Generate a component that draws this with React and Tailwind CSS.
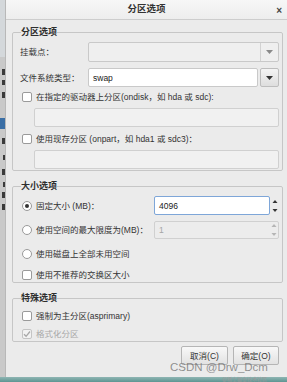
import React from 'react';

const font = { fontFamily: '"Liberation Sans", "Noto Sans CJK SC", sans-serif' };

const Check = ({ checked, disabled }) => (
    <span className={`w-[10px] h-[10px] shrink-0 rounded-[2px] border flex items-center justify-center ${disabled ? 'border-[#c4c4c4] bg-[#f2f2f2]' : 'border-[#9a9a9a] bg-white'}`}>
        {checked && (
            <svg width="8" height="8" viewBox="0 0 8 8">
                <path d="M1 4.2 L3.1 6.3 L7 1.5" fill="none" stroke={disabled ? '#a8a8a8' : '#333'} strokeWidth="1.3" />
            </svg>
        )}
    </span>
);

const Radio = ({ checked }) => (
    <span className="w-[10px] h-[10px] shrink-0 rounded-full border border-[#9a9a9a] bg-white flex items-center justify-center">
        {checked && <span className="w-[4px] h-[4px] rounded-full bg-[#333]" />}
    </span>
);

const Arrow = ({ dark }) => (
    <svg width="7" height="4" viewBox="0 0 7 4">
        <path d="M0 0 L7 0 L3.5 4 Z" fill={dark ? '#333' : '#8a8a8a'} />
    </svg>
);

const Spin = ({ color }) => (
    <svg width="6" height="16" viewBox="0 0 6 16">
        <path d="M0.5 5 L5.5 5 L3 2 Z" fill={color} />
        <path d="M0.5 11 L5.5 11 L3 14 Z" fill={color} />
    </svg>
);

const Group = ({ title, className, children }) => (
    <fieldset className={`border border-[#c6c6c6] rounded-[2px] pl-[7px] pr-[3px] ${className}`}>
        <legend className="text-[9px] leading-[12px] font-bold text-[#2e2e2e] ml-[1px]">{title}</legend>
        {children}
    </fieldset>
);

// bits of the window behind the dialog
const marks = [
    { mt: 'mt-[12px]', h: 'h-[6px]' },
    { mt: 'mt-[5px]', h: 'h-[5px]' },
    { mt: 'mt-[7px]', h: 'h-[6px]' },
];

const App = () => {
    return (
        <div className="w-[287px] h-[382px] overflow-hidden flex flex-col bg-[#c4c4c4] relative text-[#333]" style={font}>
            <div className="flex flex-1">
                <div className="w-[5px] flex flex-col overflow-hidden">
                    <div className="h-[57px] bg-[#d4d8db]" />
                    <div className="flex-1 bg-[#c9c9c9] flex flex-col items-end">
                        {marks.map((m, i) => (
                            <span key={i} className={`w-[3px] ${m.h} ${m.mt} bg-[#3a3a3a]`} />
                        ))}
                        <span className="w-full h-[11px] mt-[20px] bg-[#3a6ea5]" />
                        <span className="w-[3px] h-[6px] mt-[9px] bg-[#3a3a3a]" />
                        <span className="w-[2px] h-[5px] mt-[11px] bg-[#3a3a3a]" />
                        <span className="w-[3px] h-[6px] mt-[9px] bg-[#3a3a3a]" />
                        <span className="w-[2px] h-[5px] mt-[7px] bg-[#3a3a3a]" />
                        <span className="w-[3px] h-[6px] mt-[5px] bg-[#3a3a3a]" />
                        <span className="w-[3px] h-[6px] mt-[6px] bg-[#3a3a3a]" />
                    </div>
                </div>

                {/* dialog */}
                <div className="flex-1 flex flex-col bg-[#ebebeb] border-l border-[#b8b8b8]">
                    <div className="h-[20px] shrink-0 flex items-center justify-center relative bg-gradient-to-b from-[#f7f7f7] to-[#ededed] border-b border-[#cdcdcd]">
                        <span className="text-[9.5px] font-bold text-[#333]">分区选项</span>
                        <span className="absolute right-[5px] top-[3px] text-[10px] font-bold text-[#444]">×</span>
                    </div>

                    <div className="pl-[6px] pr-[4px] pt-[6px] flex flex-col text-[8.5px] leading-[12px] whitespace-nowrap">
                        <Group title="分区选项" className="pb-[1px]">
                            <div className="flex items-center mt-[4px] h-[20px]">
                                <span className="w-[68px] shrink-0">挂载点：</span>
                                <div className="flex-1 h-full flex border border-[#c9c9c9] rounded-[2px] bg-[#efefef]">
                                    <div className="flex-1" />
                                    <div className="w-[18px] border-l border-[#d2d2d2] flex items-center justify-center">
                                        <Arrow />
                                    </div>
                                </div>
                            </div>
                            <div className="flex items-center mt-[6px] h-[19px]">
                                <span className="w-[68px] shrink-0">文件系统类型：</span>
                                <div className="flex-1 h-full flex gap-[2px]">
                                    <div className="flex-1 bg-white border border-[#c9c9c9] rounded-[2px] flex items-center pl-[4px] text-[#222]">swap</div>
                                    <div className="w-[19px] border border-[#bdbdbd] rounded-[2px] bg-gradient-to-b from-[#f4f4f4] to-[#dedede] flex items-center justify-center">
                                        <Arrow dark />
                                    </div>
                                </div>
                            </div>
                            <div className="flex items-center gap-[4px] mt-[3px] h-[14px] pl-[2px]">
                                <Check />
                                <span>在指定的驱动器上分区(ondisk，如 hda 或 sdc):</span>
                            </div>
                            <div className="ml-[14px] mt-[4px] h-[19px] bg-[#f1f1f1] border border-[#d0d0d0] rounded-[2px]" />
                            <div className="flex items-center gap-[4px] mt-[5px] h-[14px] pl-[2px]">
                                <Check />
                                <span>使用现存分区 (onpart，如 hda1 或 sdc3)：</span>
                            </div>
                            <div className="ml-[14px] mt-[4px] h-[19px] bg-[#f1f1f1] border border-[#d0d0d0] rounded-[2px]" />
                        </Group>

                        <Group title="大小选项" className="mt-[9px]">
                            <div className="flex items-center mt-[4px] h-[19px]">
                                <div className="flex items-center gap-[4px] pl-[2px] flex-1">
                                    <Radio checked />
                                    <span>固定大小 (MB)：</span>
                                </div>
                                <div className="w-[125px] h-full flex">
                                    <div className="flex-1 bg-white border border-[#7ea6d8] rounded-[2px] flex items-center pl-[4px] text-[#222]">4096</div>
                                    <div className="w-[9px] flex items-center justify-center">
                                        <Spin color="#333" />
                                    </div>
                                </div>
                            </div>
                            <div className="flex items-center mt-[6px] h-[18px]">
                                <div className="flex items-center gap-[4px] pl-[2px] flex-1">
                                    <Radio />
                                    <span>使用空间的最大限度为(MB)：</span>
                                </div>
                                <div className="w-[125px] h-full flex border border-[#d0d0d0] rounded-[2px] bg-[#ececec]">
                                    <div className="flex-1 flex items-center pl-[4px] text-[#a5a5a5]">1</div>
                                    <div className="w-[9px] flex items-center justify-center">
                                        <Spin color="#b5b5b5" />
                                    </div>
                                </div>
                            </div>
                            <div className="flex items-center gap-[4px] mt-[8px] h-[14px] pl-[2px]">
                                <Radio />
                                <span>使用磁盘上全部未用空间</span>
                            </div>
                            <div className="flex items-center gap-[4px] mt-[7px] h-[14px] pl-[2px]">
                                <Check />
                                <span>使用不推荐的交换区大小</span>
                            </div>
                        </Group>

                        <Group title="特殊选项" className="mt-[9px]">
                            <div className="flex items-center gap-[4px] mt-[5px] h-[14px] pl-[2px]">
                                <Check />
                                <span>强制为主分区(asprimary)</span>
                            </div>
                            <div className="flex items-center gap-[4px] mt-[4px] h-[14px] pl-[2px] text-[#a8a8a8]">
                                <Check checked disabled />
                                <span>格式化分区</span>
                            </div>
                        </Group>

                        <div className="flex justify-end gap-[5px] mt-[4px] mr-[4px]">
                            <button className="w-[47px] h-[19px] border border-[#b5b5b5] rounded-[2px] bg-gradient-to-b from-[#f8f8f8] to-[#e2e2e2] text-[8.5px] text-[#333]">取消(C)</button>
                            <button className="w-[46px] h-[19px] border border-[#b5b5b5] rounded-[2px] bg-gradient-to-b from-[#f8f8f8] to-[#e2e2e2] text-[8.5px] text-[#333]">确定(O)</button>
                        </div>
                    </div>
                </div>
            </div>
            <div className="h-[5px] shrink-0 bg-gradient-to-b from-[#8fb5b3] to-[#5e9592]" />

            {/* watermark */}
            <span className="absolute left-[170px] top-[360px] whitespace-nowrap text-[11.5px] leading-[14px] text-[#6f6f6f]/75" style={{ fontFamily: '"Liberation Sans", sans-serif' }}>CSDN @Drw_Dcm</span>
            <span className="absolute left-[222px] top-[376px] whitespace-nowrap text-[5px] leading-[6px] text-[#9a9a9a]">@稀土掘金技术社区</span>
        </div>
    );
};

export default App;
